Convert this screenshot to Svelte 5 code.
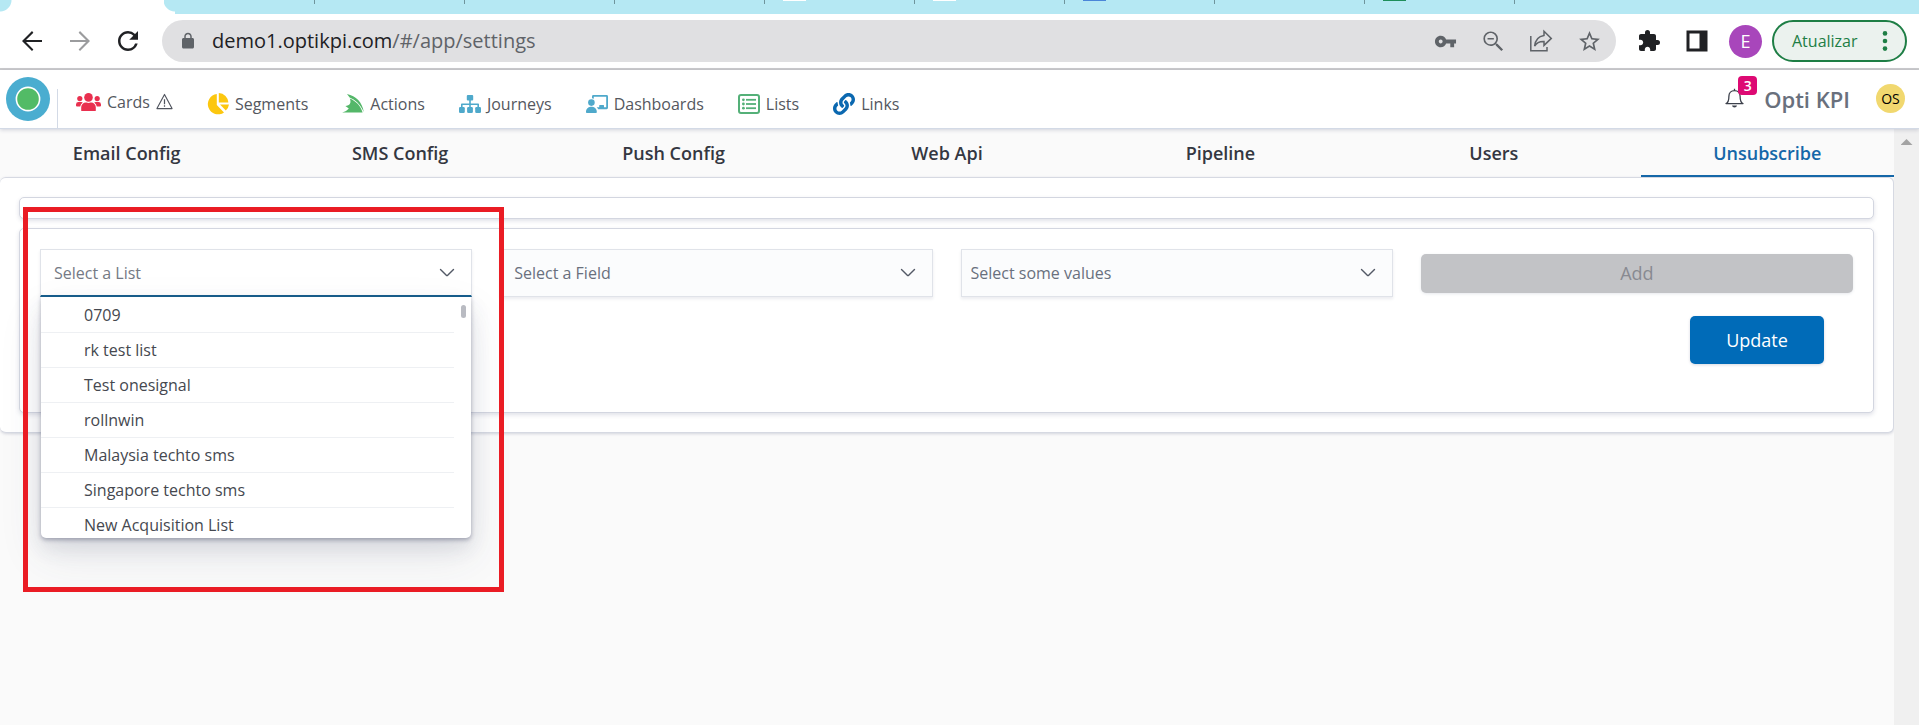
<script>
  const strip = [null, null, null, null, '#ffffff', '#ffffff', '#4a86d8', null, '#1e8e5a'];

  const nav = ['Cards', 'Segments', 'Actions', 'Journeys', 'Dashboards', 'Lists', 'Links'];

  const tabs = ['Email Config', 'SMS Config', 'Push Config', 'Web Api', 'Pipeline', 'Users', 'Unsubscribe'];
  let activeTab = $state('Unsubscribe');

  const lists = [
    '0709',
    'rk test list',
    'Test onesignal',
    'rollnwin',
    'Malaysia techto sms',
    'Singapore techto sms',
    'New Acquisition List'
  ];
  let chosen = $state('');
</script>

{#snippet chevron()}
  <svg class="chevron" width="16" height="16" viewBox="0 0 16 16" aria-hidden="true">
    <path d="M1.5 4.5 L7.3 10.3 Q8 11 8.7 10.3 L14.5 4.5" fill="none" stroke="#535966" stroke-width="1.4" stroke-linecap="round" />
  </svg>
{/snippet}

<div class="window">
  <div class="strip">
    <div class="strip-active"></div>
    {#each strip as color}
      <div class="strip-tab">
        {#if color}<i style:background={color}></i>{/if}
      </div>
    {/each}
  </div>

  <div class="toolbar">
    <div class="history">
      <button class="tool" aria-label="Back">
        <svg width="30" height="30" viewBox="0 0 24 24"><path d="M20 11.2H7.2l5.9-5.9L12 4l-8 8 8 8 1.1-1.3-5.9-5.9H20z" fill="#202124" /></svg>
      </button>
      <button class="tool" aria-label="Forward">
        <svg width="30" height="30" viewBox="0 0 24 24"><path d="M4 11.2h12.8l-5.9-5.9L12 4l8 8-8 8-1.1-1.3 5.9-5.9H4z" fill="#9b9c9e" /></svg>
      </button>
      <button class="tool" aria-label="Reload">
        <svg width="30" height="30" viewBox="0 0 24 24"><path d="M17.65 6.35A7.958 7.958 0 0 0 12 4c-4.42 0-7.99 3.58-7.99 8s3.57 8 7.99 8c3.73 0 6.84-2.55 7.73-6h-2.08A5.99 5.99 0 0 1 12 18c-3.31 0-6-2.69-6-6s2.69-6 6-6c1.66 0 3.14.69 4.22 1.78L13 11h7V4l-2.35 2.35z" fill="#202124" /></svg>
      </button>
    </div>

    <div class="omnibox">
      <svg width="18" height="18" viewBox="0 0 24 24" aria-hidden="true"><path d="M18 8h-1V6c0-2.76-2.24-5-5-5S7 3.24 7 6v2H6c-1.1 0-2 .9-2 2v10c0 1.1.9 2 2 2h12c1.1 0 2-.9 2-2V10c0-1.1-.9-2-2-2zM9 6c0-1.66 1.34-3 3-3s3 1.34 3 3v2H9V6z" fill="#5f6368" /></svg>
      <div class="url"><span>demo1.optikpi.com</span>/#/app/settings</div>
      <div class="omni-tools">
        <button class="tool" aria-label="Passwords">
          <svg width="23" height="23" viewBox="0 0 24 24"><path d="M12.65 10C11.83 7.67 9.61 6 7 6c-3.31 0-6 2.69-6 6s2.69 6 6 6c2.61 0 4.83-1.67 5.65-4H17v4h4v-4h2v-4H12.65zM7 14c-1.1 0-2-.9-2-2s.9-2 2-2 2 .9 2 2-.9 2-2 2z" fill="#5f6368" /></svg>
        </button>
        <button class="tool" aria-label="Zoom">
          <svg width="27" height="27" viewBox="0 0 24 24"><path d="M15.5 14h-.79l-.28-.27A6.47 6.47 0 0 0 16 9.5 6.5 6.5 0 1 0 9.5 16c1.61 0 3.09-.59 4.23-1.57l.27.28v.79l5 4.99L20.49 19l-4.99-5zm-6 .5C6.8 14.5 4.5 12.2 4.5 9.5S6.8 4.5 9.5 4.5s5 2.3 5 5-2.3 5-5 5zM6.7 8.8h5.6v1.4H6.7z" fill="#5f6368" /></svg>
        </button>
        <button class="tool" aria-label="Share">
          <svg width="24" height="24" viewBox="0 0 24 24" fill="none" stroke="#5f6368" stroke-width="1.5"><path d="M1.8 7v14.8H18V18" /><path d="M15 2.2 22.3 9.4 15 16.4v-4C10.6 12.2 7.6 13.6 5.6 17.2 6.2 11.4 9.2 7.2 15 6.4z" stroke-linejoin="miter" /></svg>
        </button>
        <button class="tool" aria-label="Bookmark">
          <svg width="25" height="25" viewBox="0 0 24 24"><path d="M22 9.24l-7.19-.62L12 2 9.19 8.63 2 9.24l5.46 4.73L5.82 21 12 17.27 18.18 21l-1.63-7.03L22 9.24zM12 15.4l-3.76 2.27 1-4.28-3.32-2.88 4.38-.38L12 6.1l1.71 4.04 4.38.38-3.32 2.88 1 4.28L12 15.4z" fill="#5f6368" /></svg>
        </button>
      </div>
    </div>

    <div class="browser-tools">
      <button class="tool" aria-label="Extensions">
        <svg width="24" height="24" viewBox="0 0 24 24"><path d="M20.5 11H19V7c0-1.1-.9-2-2-2h-4V3.5a2.5 2.5 0 0 0-5 0V5H4c-1.1 0-1.99.9-1.99 2v3.8H3.5c1.49 0 2.7 1.21 2.7 2.7s-1.21 2.7-2.7 2.7H2V20c0 1.1.9 2 2 2h3.8v-1.5c0-1.49 1.21-2.7 2.7-2.7s2.7 1.21 2.7 2.7V22H17c1.1 0 2-.9 2-2v-4h1.5a2.5 2.5 0 0 0 0-5z" fill="#202124" /></svg>
      </button>
      <button class="tool" aria-label="Side panel">
        <svg width="22" height="22" viewBox="0 0 22 22"><path d="M0.5 0.5h21v21h-21zM3.5 3.5v15h10v-15z" fill="#202124" fill-rule="evenodd" /></svg>
      </button>
      <button class="profile" aria-label="Profile E">E</button>
    </div>
    <button class="refresh">
      Atualizar
      <svg width="6" height="20" viewBox="0 0 6 20" aria-hidden="true"><g fill="#1e7e45"><circle cx="3" cy="2.4" r="2.3" /><circle cx="3" cy="10" r="2.3" /><circle cx="3" cy="17.6" r="2.3" /></g></svg>
    </button>
  </div>

  <header class="header">
    <a class="logo" href="#/app" aria-label="Home">
      <svg width="44" height="44" viewBox="0 0 44 44"><circle cx="22" cy="22" r="22" fill="#4aadd0" /><circle cx="22" cy="22" r="11.6" fill="#52bb66" stroke="#fff" stroke-width="1.6" /></svg>
    </a>
    <nav class="nav">
      {#each nav as label}
        <a class="nav-item" class:raised={label === 'Cards'} href={'#/app/' + label.toLowerCase()}>
          {#if label === 'Cards'}
            <svg width="25" height="18" viewBox="0 0 25 18" fill="#e9304f"><circle cx="12.5" cy="4.4" r="4.3" /><path d="M5.2 17.4v-3.2a4.6 4.6 0 0 1 4.6-4.6h.7a5 5 0 0 0 4 0h.7a4.6 4.6 0 0 1 4.6 4.6v3.2q0 .6-.6.6H5.8q-.6 0-.6-.6z" /><circle cx="3.8" cy="5.6" r="2.6" /><circle cx="21.2" cy="5.6" r="2.6" /><path d="M0 12.6V11.4A2.5 2.5 0 0 1 2.5 9h2.8q.8 0 1.5.4A6 6 0 0 0 4.2 13.4H.7Q0 13.4 0 12.6zM25 12.6v-1.2A2.5 2.5 0 0 0 22.5 9h-2.8q-.8 0-1.5.4a6 6 0 0 1 2.6 4h3.5q.7 0 .7-.8z" /></svg>
          {:else if label === 'Segments'}
            <svg width="22" height="22" viewBox="0 0 22 22" fill="#fcc70f"><path d="M9.8 1v11l7.2 7.4A10.2 10.2 0 1 1 9.8 1z" /><path d="M11.8 0A10 10 0 0 1 21.4 9.6H11.8z" /><path d="M13 11.6h9a10 10 0 0 1-3.2 6z" /></svg>
          {:else if label === 'Actions'}
            <svg width="22" height="19" viewBox="0 0 22 19" fill="#54b769"><path d="M5 0C14 1.8 20.4 8.4 21.8 18 18.4 10.4 13 5.6 7.6 3.6z" /><path d="M7.8 4.4C14.2 7 18.8 12 20.6 18.4H.2c3-.8 5-2 6.6-4L3.4 12c4.4-.4 6.2-3.4 4.4-7.6z" /></svg>
          {:else if label === 'Journeys'}
            <svg width="22" height="18" viewBox="0 0 22 18" fill="#4fa9cb"><rect x="7.8" y="0" width="6.4" height="5.6" rx="1" /><path d="M10.2 5h1.6v3.4h7.4q.8 0 .8.8V12h-1.6v-2H11.8v2h-1.6v-2H3.6v2H2V9.2q0-.8.8-.8h7.4z" /><rect x="0" y="12" width="5.8" height="6" rx="1.3" /><rect x="8.1" y="12" width="5.8" height="6" rx="1.3" /><rect x="16.2" y="12" width="5.8" height="6" rx="1.3" /></svg>
          {:else if label === 'Dashboards'}
            <svg width="22" height="18" viewBox="0 0 22 18" fill="#4fa9cb"><path d="M6 3.2V1.4Q6 0 7.4 0h13.2Q22 0 22 1.4v11.4q0 1.4-1.4 1.4h-8.4q-.5-1.2-1.5-2h2.5V10.6q0-.6.6-.6h3.6q.6 0 .6.6v1.6h2.2V1.8H7.8v2z" /><circle cx="5.4" cy="7.6" r="3.3" /><path d="M0 17.2a5 5 0 0 1 4.6-5.4h1.6a5 5 0 0 1 4.6 5.4q0 .8-.8.8H.8Q0 18 0 17.2z" /></svg>
          {:else if label === 'Lists'}
            <svg width="22" height="20" viewBox="0 0 22 20" fill="#54b078"><rect x="1" y="1" width="20" height="18" rx="2" fill="none" stroke="#54b078" stroke-width="2" /><circle cx="5.4" cy="5.8" r="1.4" /><circle cx="5.4" cy="10" r="1.4" /><circle cx="5.4" cy="14.2" r="1.4" /><rect x="8" y="4.9" width="10" height="1.8" /><rect x="8" y="9.1" width="10" height="1.8" /><rect x="8" y="13.3" width="10" height="1.8" /></svg>
          {:else}
            <svg width="22" height="22" viewBox="0 0 512 512" fill="#0b68b0"><path d="M326.612 185.391c59.747 59.809 58.927 155.698.36 214.59-.11.12-.24.25-.36.37l-67.2 67.2c-59.27 59.27-155.699 59.262-214.96 0-59.27-59.26-59.27-155.7 0-214.96l37.106-37.106c9.84-9.84 26.786-3.3 27.294 10.606.648 17.722 3.826 35.527 9.69 52.721 1.986 5.822.567 12.262-3.783 16.612l-13.087 13.087c-28.026 28.026-28.905 73.66-1.155 101.96 28.024 28.579 74.086 28.749 102.325.51l67.2-67.19c28.191-28.191 28.073-73.757 0-101.83-3.701-3.694-7.429-6.564-10.341-8.569a16.037 16.037 0 0 1-6.947-12.606c-.396-10.567 3.348-21.456 11.698-29.806l21.054-21.055c5.521-5.521 14.182-6.199 20.584-1.731a152.482 152.482 0 0 1 20.522 17.197zM467.547 44.449c-59.261-59.262-155.69-59.27-214.96 0l-67.2 67.2c-.12.12-.25.25-.36.37-58.566 58.892-59.387 154.781.36 214.59a152.454 152.454 0 0 0 20.521 17.196c6.402 4.468 15.064 3.789 20.584-1.731l21.054-21.055c8.35-8.35 12.094-19.239 11.698-29.806a16.037 16.037 0 0 0-6.947-12.606c-2.912-2.005-6.64-4.875-10.341-8.569-28.073-28.073-28.191-73.639 0-101.83l67.2-67.19c28.239-28.239 74.3-28.069 102.325.51 27.75 28.3 26.872 73.934-1.155 101.96l-13.087 13.087c-4.35 4.35-5.769 10.79-3.783 16.612 5.864 17.194 9.042 34.999 9.69 52.721.509 13.906 17.454 20.446 27.294 10.606l37.106-37.106c59.271-59.259 59.271-155.699.001-214.959z" /></svg>
          {/if}
          <span>{label}</span>
          {#if label === 'Cards'}
            <svg width="17" height="17" viewBox="0 0 18 17" fill="none" stroke="#50545e" stroke-width="1.2"><path d="M9 1 17 16H1z" stroke-linejoin="round" /><path d="M9 6v5.4M9 12.6v1.4" stroke-width="1.3" /></svg>
          {/if}
        </a>
      {/each}
    </nav>
    <div class="account">
      <button class="bell" aria-label="Notifications">
        <svg width="19" height="21" viewBox="0 0 19 21"><path d="M1 15.6h17c-2.4-1-2.9-3-2.9-7.4C15.1 5 12.8 2.7 9.5 2.7S3.9 5 3.9 8.2C3.9 12.6 3.4 14.6 1 15.6zM9.5 2.7V.8" fill="none" stroke="#3c404b" stroke-width="1.3" stroke-linejoin="round" /><path d="M7 17.6h5q-.4 2-2.5 2T7 17.6z" fill="#3c404b" /></svg>
        <span class="badge">3</span>
      </button>
      <span class="tenant">Opti KPI</span>
      <span class="avatar">OS</span>
    </div>
  </header>

  <div class="body">
    <main class="main">
      <div class="tabs" role="tablist">
        {#each tabs as tab}
          <button class="tab" class:active={tab === activeTab} role="tab" aria-selected={tab === activeTab} onclick={() => (activeTab = tab)}>{tab}</button>
        {/each}
      </div>

      <section class="panel">
        <div class="card summary"></div>
        <div class="card form">
          <div class="fields">
            <div class="field open">
              <input class="control" type="text" role="combobox" aria-label="Select a List" aria-expanded="true" aria-controls="list-options" placeholder="Select a List" bind:value={chosen} />
              {@render chevron()}
              <div class="popover">
                <ul id="list-options" role="listbox" aria-label="Lists">
                  {#each lists as name}
                    <li role="option" aria-selected={chosen === name}>
                      <button tabindex="-1" onclick={() => (chosen = name)}>{name}</button>
                    </li>
                  {/each}
                </ul>
                <span class="thumb"></span>
              </div>
              <div class="highlight"></div>
            </div>
            <div class="field">
              <select class="control" aria-label="Select a Field"><option>Select a Field</option></select>
              {@render chevron()}
            </div>
            <div class="field">
              <select class="control compact" aria-label="Select some values"><option>Select some values</option></select>
              {@render chevron()}
            </div>
            <button class="add" disabled>Add</button>
          </div>
          <div class="actions"><button class="update">Update</button></div>
        </div>
      </section>
    </main>
    <div class="scrollbar" aria-hidden="true"><i></i></div>
  </div>
</div>

<style>
  :global(body) {
    margin: 0;
    background: #fafafa;
  }
  .window {
    display: flex;
    flex-direction: column;
    min-height: 100vh;
    overflow: hidden;
    font-family: 'Open Sans', 'Segoe UI', sans-serif;
    color: #343741;
  }
  .window * {
    box-sizing: border-box;
  }
  button,
  input,
  select {
    font-family: inherit;
    margin: 0;
  }
  button {
    border: 0;
    padding: 0;
    background: none;
  }
  svg {
    display: block;
    flex: none;
  }

  .strip {
    display: flex;
    height: 14px;
    background: #b5e8f3;
    overflow: hidden;
  }
  .strip-active {
    width: 175px;
    margin-right: -10px;
    flex: none;
    background:
      radial-gradient(circle at 0 0, #b5e8f3 11px, #fff 12px) 0 0 / 14px 14px no-repeat,
      radial-gradient(circle at 100% 0, #b5e8f3 11px, #fff 12px) 100% 0 / 11px 14px no-repeat,
      linear-gradient(#fff, #fff);
  }
  .strip-tab {
    width: 150px;
    height: 4px;
    flex: none;
    border-right: 1px solid #6f949c;
  }
  .strip-tab i {
    display: block;
    width: 23px;
    height: 1px;
    margin-left: 18px;
  }

  .toolbar {
    display: flex;
    align-items: center;
    padding: 6px 12px 6px 16px;
    background: #fff;
    border-bottom: 2px solid #cbcbcd;
  }
  .history,
  .omni-tools,
  .browser-tools {
    display: flex;
    align-items: center;
    gap: 16px;
  }
  .tool {
    display: flex;
    align-items: center;
    justify-content: center;
    width: 32px;
    height: 32px;
  }
  .omnibox {
    flex: 1;
    display: flex;
    align-items: center;
    height: 42px;
    margin: 0 17px 0 18px;
    padding: 0 11px 0 17px;
    border-radius: 21px;
    background: #e0e0e2;
  }
  .url {
    flex: 1;
    padding-left: 15px;
    font-size: 20px;
    line-height: 28px;
    color: #5f6368;
  }
  .url span {
    color: #202124;
  }
  .profile {
    width: 33px;
    height: 33px;
    border-radius: 50%;
    background: #a846bb;
    color: #fff;
    font-size: 18px;
    line-height: 33px;
  }
  .refresh {
    display: flex;
    align-items: center;
    justify-content: space-between;
    width: 135px;
    height: 42px;
    margin-left: 10px;
    padding: 0 17px 0 18px;
    border: 2px solid #1e7e45;
    border-radius: 21px;
    background: #ebf2ee;
    color: #1e7e45;
    font-size: 16px;
  }

  .header {
    position: relative;
    z-index: 1;
    display: flex;
    height: 59px;
    background: #fff;
    border-bottom: 1px solid #d3dae6;
    box-shadow: 0 1px 4px rgba(60, 70, 110, 0.22);
  }
  .logo {
    padding: 7px 7px 0 6px;
  }
  .nav {
    display: flex;
    align-items: center;
    gap: 34px;
    height: 39px;
    margin-top: 19px;
    padding: 0 0 10px 18px;
    border-left: 1px solid #d3dae6;
  }
  .nav-item {
    display: flex;
    align-items: center;
    gap: 6px;
    color: #54575e;
    text-decoration: none;
    font-size: 16px;
    line-height: 24px;
    white-space: nowrap;
  }
  .nav-item.raised {
    padding-bottom: 4px;
  }
  .account {
    display: flex;
    align-items: center;
    margin-left: auto;
    padding: 0 14px 2px 0;
  }
  .bell {
    position: relative;
    width: 19px;
    height: 21px;
    margin-right: 20px;
  }
  .badge {
    position: absolute;
    left: 13px;
    top: -12px;
    width: 19px;
    height: 19px;
    border-radius: 4px;
    background: #dd0a73;
    color: #fff;
    font-size: 14px;
    font-weight: 600;
    line-height: 19px;
  }
  .tenant {
    margin-right: 26px;
    padding-top: 2px;
    font-size: 22px;
    font-weight: 600;
    line-height: 32px;
    color: #69707d;
  }
  .avatar {
    width: 29px;
    height: 29px;
    border-radius: 50%;
    background: #f1d86f;
    color: #000;
    font-size: 14px;
    line-height: 29px;
    text-align: center;
  }

  .body {
    flex: 1;
    display: flex;
  }
  .main {
    flex: 1;
    min-width: 0;
  }
  .scrollbar {
    width: 25px;
    padding-top: 10px;
    background: #f0f0f0;
  }
  .scrollbar i {
    display: block;
    width: 12px;
    height: 6px;
    margin: 0 auto;
    background: #a3a3a3;
    clip-path: polygon(50% 0, 100% 100%, 0 100%);
  }
  .tabs {
    display: grid;
    grid-template-columns: repeat(7, 1fr);
    gap: 20px;
  }
  .tab {
    height: 48px;
    padding-top: 1px;
    border-bottom: 2px solid transparent;
    color: #343741;
    font-size: 18px;
    font-weight: 600;
    line-height: 24px;
  }
  .tab.active {
    border-bottom-color: #1567a8;
    color: #1567a8;
  }

  .panel {
    display: flex;
    flex-direction: column;
    gap: 9px;
    padding: 19px;
    background: #fff;
    border: 1px solid #d6d9e2;
    border-left: 0;
    border-radius: 6px;
    box-shadow: 0 1px 3px rgba(60, 70, 110, 0.2);
  }
  .card {
    background: #fff;
    border: 1px solid #d3d6e0;
    border-radius: 5px;
    box-shadow: 0 2px 4px rgba(60, 70, 110, 0.16);
  }
  .summary {
    height: 22px;
  }
  .form {
    padding: 20px 20px 48px;
  }
  .fields {
    display: grid;
    grid-template-columns: repeat(4, 1fr);
    gap: 28px;
    align-items: center;
  }
  .field {
    position: relative;
    height: 48px;
  }
  .control {
    display: block;
    appearance: none;
    width: 100%;
    height: 48px;
    padding: 0 40px 0 13px;
    border: 1px solid #e0e3e9;
    border-radius: 0;
    outline: 0;
    background: #fbfcfd;
    box-shadow: 0 2px 3px rgba(60, 70, 110, 0.1);
    color: #69707d;
    font-size: 16px;
  }
  .control.compact {
    padding-left: 9px;
  }
  .control::placeholder {
    color: #757a85;
    opacity: 1;
  }
  .open .control {
    background: #fff;
    border-bottom: 2px solid #17608f;
  }
  .chevron {
    position: absolute;
    right: 17px;
    top: 16px;
    pointer-events: none;
  }
  .popover {
    position: absolute;
    z-index: 2;
    top: 48px;
    left: 1px;
    right: 1px;
    height: 241px;
    border-radius: 0 0 5px 5px;
    background: #fff;
    box-shadow:
      0 2px 4px rgba(60, 66, 95, 0.4),
      0 10px 20px rgba(60, 66, 95, 0.12),
      0 18px 44px rgba(60, 66, 95, 0.1);
    overflow: hidden;
  }
  .popover ul {
    margin: 1px 17px 0 0;
    padding: 0;
    list-style: none;
  }
  .popover li {
    border-bottom: 1px solid #eef0f3;
  }
  .popover li button {
    display: block;
    width: 100%;
    height: 34px;
    padding: 0 0 0 43px;
    color: #45484f;
    font-size: 16px;
    line-height: 34px;
    text-align: left;
  }
  .thumb {
    position: absolute;
    top: 8px;
    right: 5px;
    width: 5px;
    height: 13px;
    border-radius: 3px;
    background: #b9bbc2;
  }
  .highlight {
    position: absolute;
    z-index: 3;
    top: -42px;
    left: -17px;
    right: -32px;
    height: 385px;
    border: 5px solid #ea1c24;
    pointer-events: none;
  }
  .add {
    height: 39px;
    border-radius: 5px;
    background: #c2c3c6;
    color: #888a91;
    font-size: 18px;
    box-shadow: 0 1px 3px rgba(60, 70, 110, 0.12);
  }
  .actions {
    display: flex;
    justify-content: flex-end;
    padding: 19px 29px 0 0;
  }
  .update {
    width: 134px;
    height: 48px;
    border-radius: 5px;
    background: #006bb8;
    color: #fff;
    font-size: 18px;
    box-shadow: 0 1px 3px rgba(60, 70, 110, 0.2);
  }
</style>
